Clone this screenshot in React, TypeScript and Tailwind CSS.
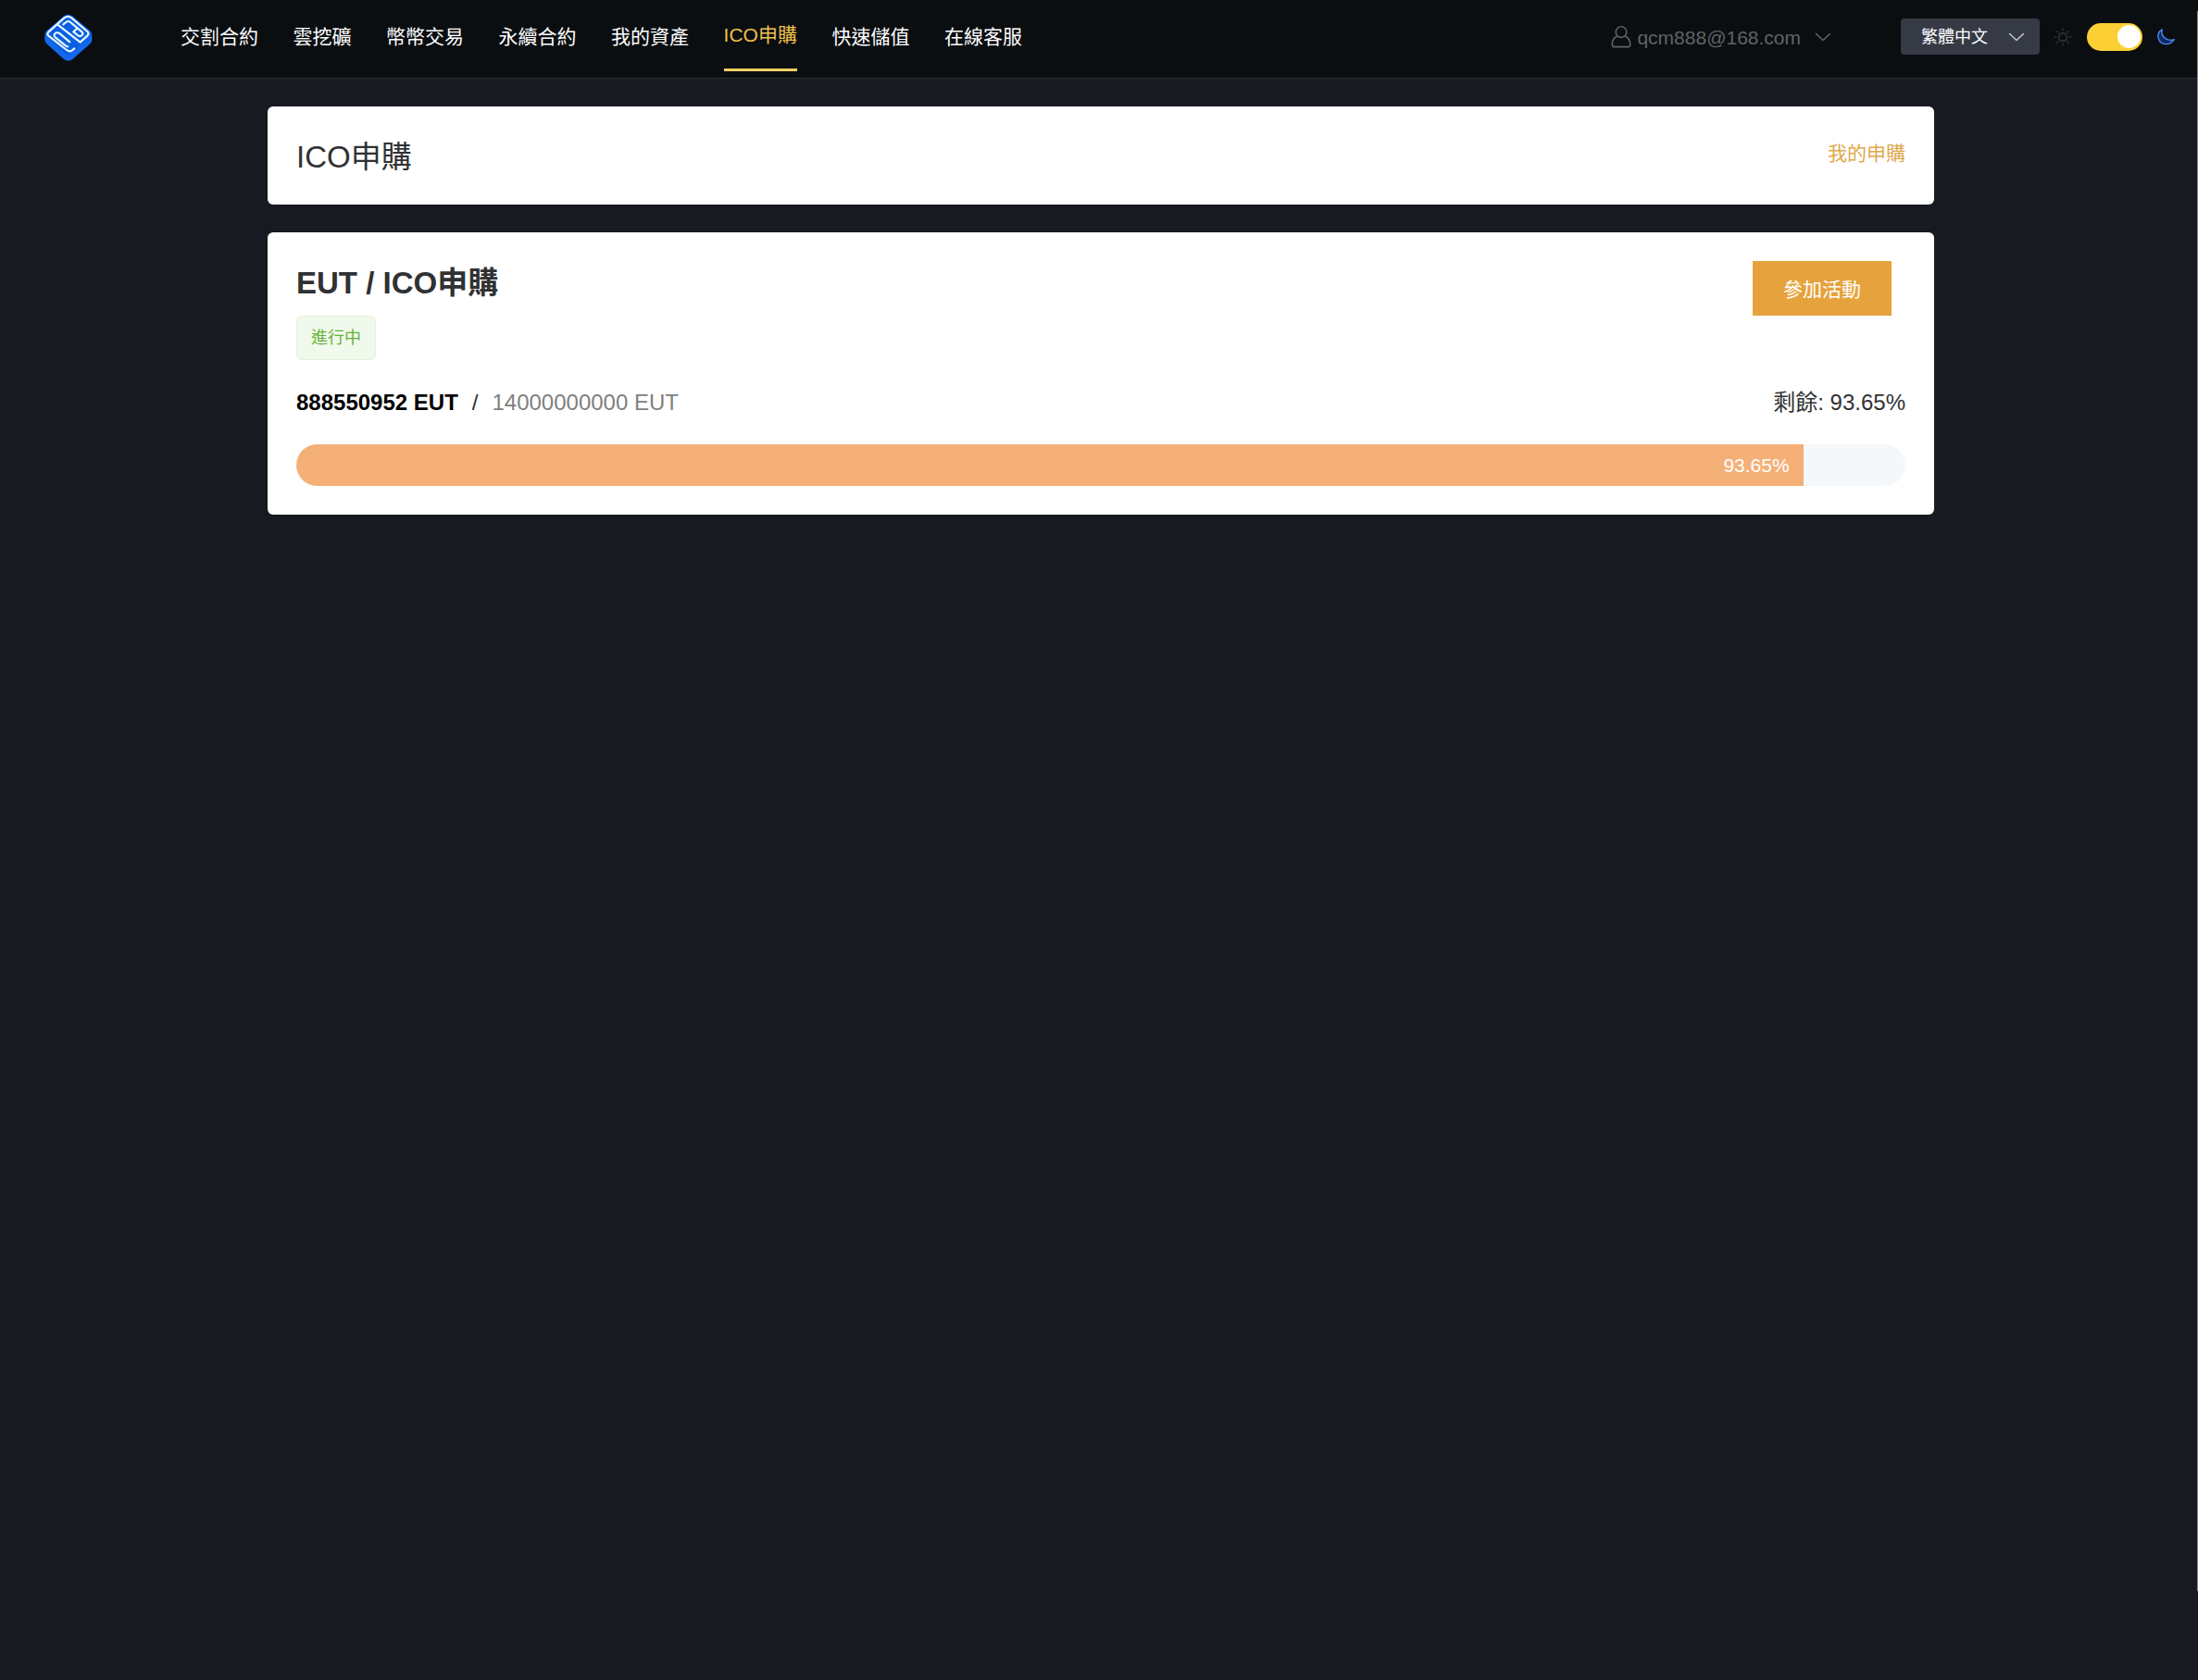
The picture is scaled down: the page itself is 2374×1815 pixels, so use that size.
import { useState } from 'react';

const NAV_ITEMS = [
  { label: '交割合約', href: '#delivery' },
  { label: '雲挖礦', href: '#mining' },
  { label: '幣幣交易', href: '#spot' },
  { label: '永續合約', href: '#perpetual' },
  { label: '我的資產', href: '#assets' },
  { label: 'ICO申購', href: '#ico' },
  { label: '快速儲值', href: '#deposit' },
  { label: '在線客服', href: '#support' },
];

const ACTIVE = 'ICO申購';

function Logo() {
  return (
    <svg viewBox="12 16 156 156" className="h-[52px] w-[52px]" fill="none" aria-hidden="true">
      <path d="M76 23Q89 13 102 23L160 71Q166 77 166 87V101Q166 107 160 113L103 163Q89 174 75 163L19 113Q13 107 13 101V87Q13 77 19 71Z" fill="#1268ea" />
      <path d="M76 23Q89 13 102 23L158 71Q168 81 160 90L103 142Q89 153 75 142L19 90Q11 81 19 73Z" fill="#0a60e0" />
      <g stroke="#e8f7ff" strokeWidth="6.5" strokeLinecap="round" strokeLinejoin="round">
        <path d="M109 128L102 134Q93 141 84 133L25 87Q19 81 25 75L76 29Q88 20 100 29L151 73Q158 80 151 87L128 108L54 50" />
        <path d="M88 122Q82 122 78 117L47 92Q40 85 47 79Q54 74 62 80L94 107" />
        <path d="M73 50L82 43Q89 37 96 43L119 62L106 74L121 86Q128 91 134 85Q139 80 133 74L119 62" />
      </g>
    </svg>
  );
}

function UserIcon() {
  return (
    <svg viewBox="0 0 22 26" className="h-[26px] w-[22px]" fill="none" stroke="currentColor" strokeWidth="1.6" aria-hidden="true">
      <circle cx="11" cy="7.6" r="5.8" />
      <path d="M6.8 12C3.4 13.6 1.4 16.6 1.2 20.6C1.1 22.6 2 23.6 3.8 23.6H18.2C20 23.6 20.9 22.6 20.8 20.6C20.6 16.6 18.6 13.6 15.2 12" />
    </svg>
  );
}

function ChevronIcon() {
  return (
    <svg viewBox="0 0 18 10" className="h-[10px] w-[18px]" fill="none" stroke="currentColor" strokeWidth="1.6" strokeLinecap="round" aria-hidden="true">
      <path d="M1.5 1.5L9 8.5L16.5 1.5" />
    </svg>
  );
}

function SunIcon() {
  return (
    <svg viewBox="0 0 20 20" className="h-5 w-5" fill="none" stroke="currentColor" strokeWidth="1.6" strokeLinecap="round" aria-hidden="true">
      <circle cx="10" cy="10" r="4.4" />
      <path d="M10 1.2V2.8M10 17.2V18.8M1.2 10H2.8M17.2 10H18.8M3.8 3.8L4.9 4.9M15.1 15.1L16.2 16.2M3.8 16.2L4.9 15.1M15.1 4.9L16.2 3.8" />
    </svg>
  );
}

function MoonIcon() {
  return (
    <svg viewBox="0 0 20 20" className="h-5 w-5" fill="#0c2a66" stroke="currentColor" strokeWidth="1.4" strokeLinejoin="round" aria-hidden="true">
      <path d="M5.2 1.8C.8 4 -.2 9.4 2 13.4C5 18.8 14 19.6 18.2 12.6C11.8 15.2 3.2 10.4 5.2 1.8Z" />
    </svg>
  );
}

export default function App() {
  const [dark, setDark] = useState(true);
  const percent = 93.65;

  return (
    <div className="relative min-h-screen bg-[#171a20] font-['Liberation_Sans','Noto_Sans_CJK_TC',sans-serif] text-[21px] leading-[30px] text-[#303133]">
      <header className="flex h-[85px] items-center border-b border-[#2a2d33] bg-[#0b0e11] pr-6 pl-12">
        <a href="#home" aria-label="Home" className="mb-[2px]">
          <Logo />
        </a>
        <nav className="ml-[95px] flex h-full w-[909px] items-stretch justify-between text-white">
          {NAV_ITEMS.map((item) => (
            <a
              key={item.label}
              href={item.href}
              className={
                item.label === ACTIVE
                  ? 'mb-[7px] flex items-center border-b-[3px] border-[#f0cf62] pt-[2px] text-[#f0c04c]'
                  : 'mb-1 flex items-center'
              }
            >
              {item.label}
            </a>
          ))}
        </nav>

        <div className="mb-[5px] ml-auto flex items-center">
          <button type="button" className="flex items-center text-[#5f6368]">
            <UserIcon />
            <span className="ml-[6px] pt-[2px]">qcm888@168.com</span>
            <span className="ml-[15px]">
              <ChevronIcon />
            </span>
          </button>

          <div className="relative ml-[75px] text-lg text-white">
            <select
              aria-label="語言"
              defaultValue="zh-TW"
              className="block h-[39px] w-[150px] appearance-none rounded-sm bg-[#363a45] pt-[2px] pl-[22px] leading-[37px] outline-none"
            >
              <option value="zh-TW">繁體中文</option>
              <option value="en">English</option>
            </select>
            <span className="pointer-events-none absolute inset-y-0 right-4 flex items-center text-[#c0c4cc]">
              <ChevronIcon />
            </span>
          </div>

          <span className="ml-[15px] text-[#303133]">
            <SunIcon />
          </span>
          <button
            type="button"
            role="switch"
            aria-checked={dark}
            aria-label="Dark mode"
            onClick={() => setDark(!dark)}
            className={`mx-4 flex h-[30px] w-[60px] items-center rounded-full bg-[#fcd034] px-[2px] ${dark ? 'justify-end' : 'justify-start'}`}
          >
            <span className="h-[25px] w-[25px] rounded-full bg-white" />
          </button>
          <span className="text-[#4a86ee]">
            <MoonIcon />
          </span>
        </div>
      </header>

      <main className="py-[30px] pl-1">
        <div className="mx-auto flex max-w-[1800px] flex-col gap-[30px]">
          <section className="flex items-start justify-between rounded-md bg-white px-[31px] pt-[36px] pb-[32px]">
            <h1 className="text-[33px] leading-[38px]">ICO申購</h1>
            <a href="#my-ico" className="text-[#e0a84c]">
              我的申購
            </a>
          </section>

          <section className="rounded-md bg-white px-[31px] pt-[31px] pb-[31px]">
            <div className="flex items-start justify-between">
              <div>
                <h2 className="text-[33px] leading-[48px] font-bold">EUT / ICO申購</h2>
                <span className="mt-[11px] block h-12 w-fit rounded-md border border-[#e1f3d8] bg-[#f0f9eb] px-[15px] text-lg leading-[46px] text-[#67b23a]">
                  進行中
                </span>
              </div>
              <button type="button" className="mr-[15px] h-[59px] w-[150px] bg-[#e6a23c] pt-[2px] text-white">
                參加活動
              </button>
            </div>

            <div className="mt-7 flex items-center justify-between text-2xl leading-[36px]">
              <p className="flex gap-[15px]">
                <b className="text-black">888550952 EUT</b>
                <span>/</span>
                <span className="text-[#808080]">14000000000 EUT</span>
              </p>
              <p>剩餘: {percent}%</p>
            </div>

            <div
              role="progressbar"
              aria-valuenow={percent}
              aria-valuemin={0}
              aria-valuemax={100}
              aria-label="剩餘"
              className="mt-[27px] h-[45px] overflow-hidden rounded-full bg-[#f5f8fb]"
            >
              <div
                className="flex h-full items-center justify-end bg-[#f5b078] pr-[15px] text-white"
                style={{ width: `${percent}%` }}
              >
                {percent}%
              </div>
            </div>
          </section>
        </div>
      </main>

      {/* scroll thumb along the window edge */}
      <div className="absolute top-3 right-0 bottom-24 w-px bg-[#8a8c8f]" />
    </div>
  );
}
